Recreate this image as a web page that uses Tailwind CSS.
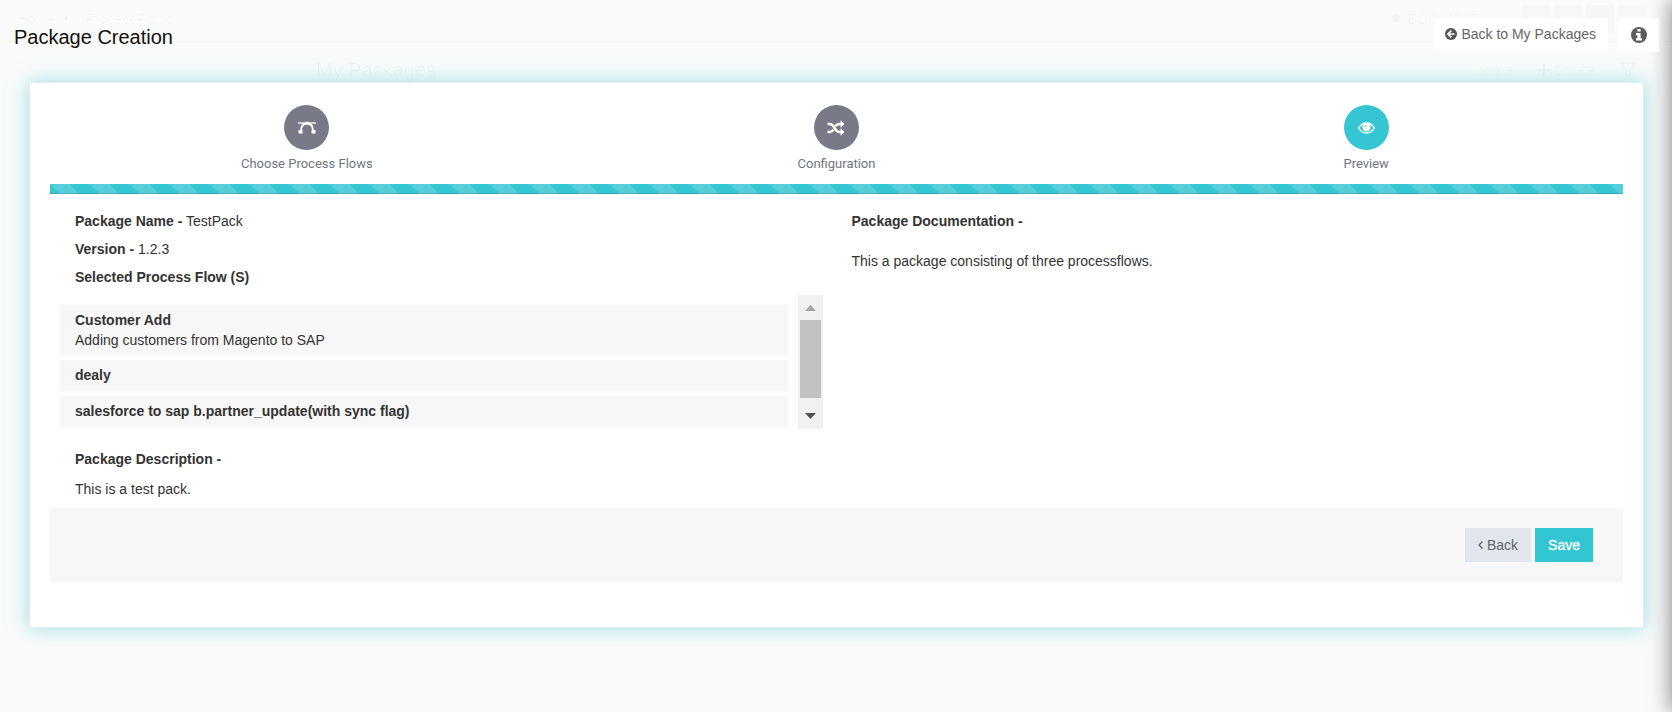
<!DOCTYPE html>
<html lang="en">
<head>
<meta charset="utf-8">
<title>Package Creation</title>
<script src="https://cdn.jsdelivr.net/npm/@tailwindcss/browser@4"></script>
</head>
<body class="relative min-h-screen overflow-x-hidden bg-[#fafafa] font-['Liberation_Sans',Arial,sans-serif] text-sm text-[#333]">

<!-- Page underneath the dialog, almost hidden by the overlay -->
<div aria-hidden="true" class="absolute inset-x-0 top-0 h-screen overflow-hidden text-black/3">
  <div class="flex h-[42px] items-center border-b border-black/2 pt-1 pr-[26px] pb-2 pl-[18px]">
    <span>Home</span><span class="ml-2 text-[10px]">●</span><span class="ml-4">ProcessFlows</span>
    <span class="ml-auto flex items-center gap-2"><svg class="h-[10px] w-2" viewBox="0 0 8 12" fill="currentColor"><path d="M0 0h8v12L4 8l-4 4z"/></svg>BOOKMARKS</span>
    <span class="ml-6 h-7 w-7 bg-black/1"></span><span class="ml-1 h-7 w-7 bg-black/1"></span><span class="ml-1 h-7 w-7 bg-blue-900/2"></span><span class="ml-1 h-7 w-7 bg-black/1"></span>
  </div>
  <div class="flex items-center pt-[14px] pr-9 pl-[316px]">
    <span class="text-xl">My Packages</span>
    <span class="ml-auto flex items-center gap-6"><span>☐ Share</span><span>✚ Create</span><svg class="h-4 w-4" viewBox="0 0 16 16" fill="none" stroke="currentColor"><path d="M1 1h14L10 8v7L6 12V8z"/></svg></span>
  </div>
</div>
<div aria-hidden="true" class="absolute inset-y-0 left-full w-10 shadow-[0_0_22px_rgba(0,0,0,0.5)]"></div>

<div class="relative">
  <header class="flex items-start pt-[18px] pr-[13px] pl-[14px]">
    <h1 class="pt-[5px] text-xl leading-7 text-[#111]">Package Creation</h1>
    <a href="#packages" class="ml-auto flex h-8 items-center gap-1 bg-white px-3 leading-5 whitespace-nowrap text-[#666]">
      <svg class="h-3 w-3" viewBox="0 0 12 12"><circle cx="6" cy="6" r="6" fill="#555"/><path d="M6.300 2.600L2.900 6l3.400 3.400M3.200 6h6.300" fill="none" stroke="#fff" stroke-width="1.600"/></svg>
      Back to My Packages</a>
    <button type="button" aria-label="Information" class="ml-[10px] flex h-[34px] w-[41px] items-center justify-center bg-white">
      <svg class="h-4 w-4" viewBox="0 0 16 16"><circle cx="8" cy="8" r="8" fill="#5c5c5c"/><path d="M6.400 2h3.200v2.600H6.400zM5 6h4.600v5.300H11v2.200H5v-2.200h1.400V8.200H5z" fill="#fff"/></svg>
    </button>
  </header>

  <main class="mr-7 ml-[29px] mt-[30px] border border-[#e7ecf1] bg-white px-5 pt-[22px] pb-[45px] shadow-[0_0_18px_rgba(54,198,211,0.5)]">
    <ol class="-mx-2 grid grid-cols-3 text-center font-[Roboto,sans-serif] text-[13px] text-[#6f7580]">
      <li class="flex flex-col items-center">
        <span class="flex h-[45px] w-[45px] items-center justify-center rounded-full bg-[#787b87] text-white">
          <svg class="h-[18px] w-[18px]" viewBox="0 0 18 18" fill="none" stroke="currentColor"><path d="M0 4h18" stroke-width="1.300"/><path d="M3 12C3 7.500 5 4.500 9 4.500s6 3 6 7.500" stroke-width="1.800"/><path d="M7 2.800h4v2.600H7z" fill="currentColor" stroke="none"/><path d="M.5 11h4v3.500h-4zM13.500 11h4v3.500h-4z" fill="currentColor" stroke="none"/></svg>
        </span>
        <span class="pt-1 leading-5">Choose Process Flows</span>
      </li>
      <li class="flex flex-col items-center">
        <span class="flex h-[45px] w-[45px] items-center justify-center rounded-full bg-[#787b87] text-white">
          <svg class="h-4 w-[18px]" viewBox="0 0 18 16" fill="none" stroke="currentColor" stroke-width="2.500"><path d="M.5 4h2.500c4.500 0 4.500 8 9.500 8H14M.5 12h2.500c1.700 0 2.700-1 3.400-2.300M8.400 6.200C9.200 4.900 10.300 4 12.500 4H14"/><path d="M13.500.2L17.500 4l-4 3.800zM13.500 8.200l4 3.800-4 3.800z" fill="currentColor" stroke="none"/></svg>
        </span>
        <span class="pt-1 leading-5">Configuration</span>
      </li>
      <li class="flex flex-col items-center" aria-current="step">
        <span class="flex h-[45px] w-[45px] items-center justify-center rounded-full bg-[#36c6d3] text-white">
          <svg class="h-3 w-[17px]" viewBox="0 0 17 12" fill="none" stroke="currentColor" stroke-width="1.500"><path d="M.8 6C4.600-.7 12.400-.7 16.200 6c-3.800 6.700-11.600 6.700-15.400 0z"/><circle cx="8.500" cy="5.200" r="4" fill="currentColor" stroke="none"/><path d="M6.600 5.200a1.900 1.900 0 0 1 1.900-1.900" stroke="#36c6d3" stroke-width=".8"/></svg>
        </span>
        <span class="pt-1 leading-5">Preview</span>
      </li>
    </ol>

    <div role="progressbar" aria-label="Wizard progress" aria-valuenow="100" class="mt-[10px] h-[10px] bg-[#36c6d3] bg-[linear-gradient(45deg,rgba(255,255,255,0.15)_25%,transparent_25%,transparent_50%,rgba(255,255,255,0.15)_50%,rgba(255,255,255,0.15)_75%,transparent_75%)] bg-[length:40px_40px] shadow-[inset_0_-1px_0_rgba(0,0,0,0.15)]"></div>

    <div class="grid grid-cols-2 pt-[13px]">
      <section class="pr-[14px] pl-[10px]">
        <div class="pl-[15px] leading-7">
          <p><b>Package Name -</b> TestPack</p>
          <p><b>Version -</b> 1.2.3</p>
          <h2 class="font-bold">Selected Process Flow (S)</h2>
        </div>
        <div class="mt-1 flex gap-[10px]">
          <ul class="flex flex-1 flex-col gap-[5px] pt-[10px] leading-5">
            <li class="bg-[#f7f7f7] py-[5px] pl-[15px]"><b class="block">Customer Add</b>Adding customers from Magento to SAP</li>
            <li class="bg-[#f7f7f7] pt-[5px] pb-[6px] pl-[15px] font-bold">dealy</li>
            <li class="bg-[#f7f7f7] pt-[5px] pb-[6px] pl-[15px] font-bold">salesforce to sap b.partner_update(with sync flag)</li>
          </ul>
          <div aria-hidden="true" class="flex h-[134px] w-[25px] flex-col items-center bg-[#f1f1f1]">
            <svg class="mt-[10px] h-[6px] w-[11px]" viewBox="0 0 11 6" fill="#a3a3a3"><path d="M0 6L5.500 0 11 6z"/></svg>
            <div class="mt-[9px] h-[78px] w-[21px] bg-[#c1c1c1]"></div>
            <svg class="mt-[15px] h-[6px] w-[11px]" viewBox="0 0 11 6" fill="#505050"><path d="M0 0h11L5.500 6z"/></svg>
          </div>
        </div>
        <div class="pt-4 pb-[6px] pl-[15px]">
          <h2 class="leading-7 font-bold">Package Description -</h2>
          <p class="pt-[3px] leading-[26px]">This is a test pack.</p>
        </div>
      </section>
      <section class="pl-[15px]">
        <h2 class="leading-7 font-bold">Package Documentation -</h2>
        <p class="pt-4 leading-5">This a package consisting of three processflows.</p>
      </section>
    </div>

    <footer class="flex justify-end gap-1 bg-[#f7f7f7] px-[30px] py-5">
      <button type="button" class="flex h-[34px] items-center gap-1 bg-[#e1e5ec] px-[13px] text-[#666]"><svg class="h-2 w-[5px]" viewBox="0 0 5 8" fill="none" stroke="currentColor" stroke-width="1.300"><path d="M4.500.5L1 4l3.500 3.500"/></svg>Back</button>
      <button type="button" class="h-[34px] bg-[#32c5d2] px-[13px] text-white [-webkit-text-stroke:0.3px_white]">Save</button>
    </footer>
  </main>
</div>
</body>
</html>
